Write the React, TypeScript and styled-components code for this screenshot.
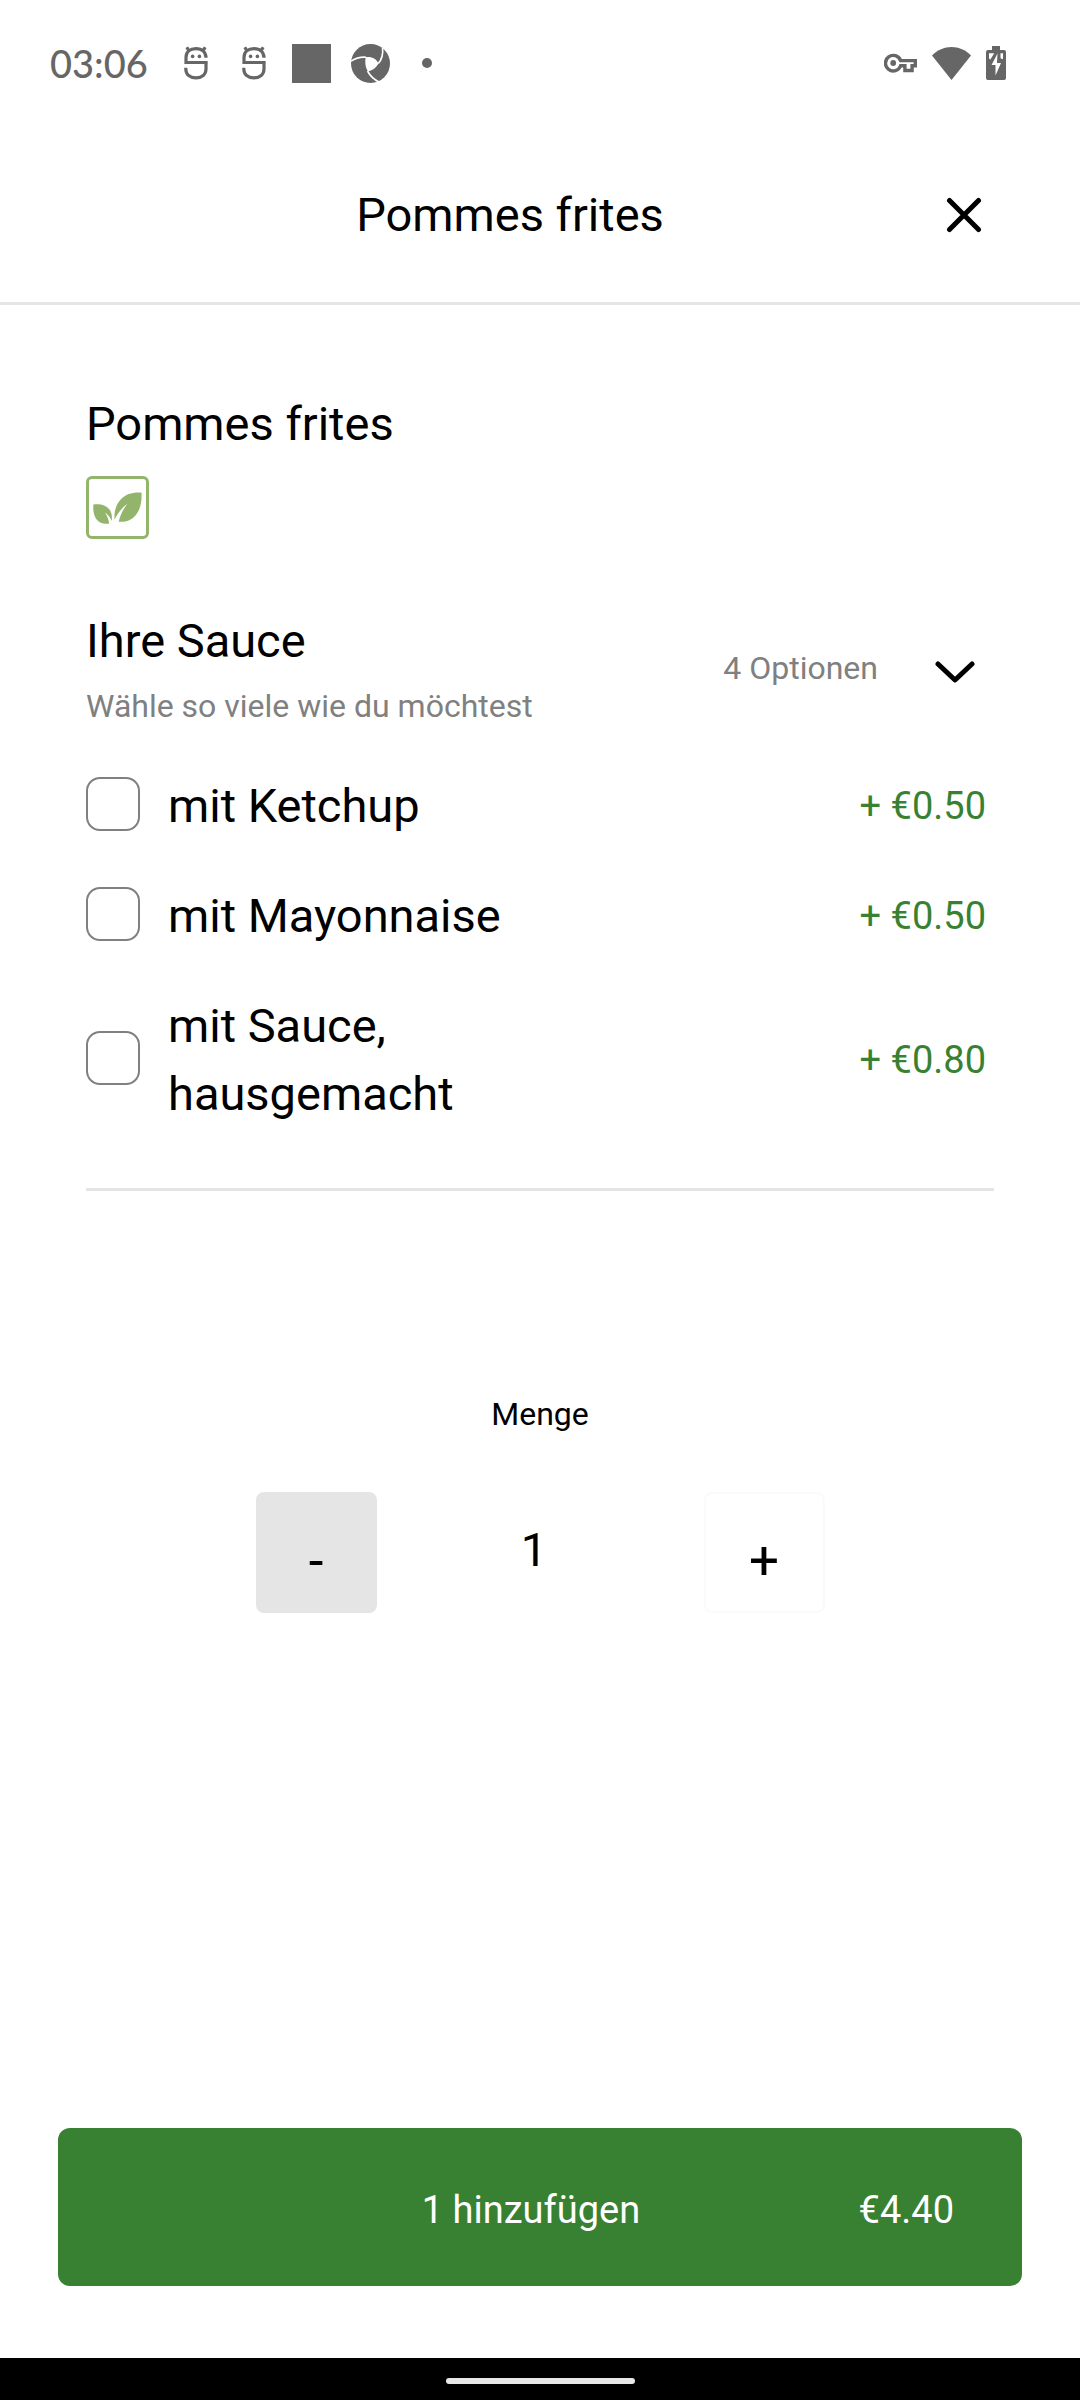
import React, { useState } from "react";
import styled, { createGlobalStyle } from "styled-components";

const GlobalStyle = createGlobalStyle`
  *, *::before, *::after { box-sizing: border-box; }
  body {
    margin: 0;
    background: #ffffff;
    color: #000000;
    font-family: Roboto, "Noto Sans", sans-serif;
  }
  h1, h2, h3, p, ul { margin: 0; padding: 0; font-weight: 400; }
  button, input { font: inherit; color: inherit; }
  svg { display: block; }
`;

const Page = styled.div`
  display: flex;
  flex-direction: column;
  min-height: 100vh;
`;

const StatusBar = styled.div`
  display: flex;
  align-items: center;
  justify-content: space-between;
  height: 126px;
  padding: 0 74px 0 50px;
  color: #666666;
`;

const Clock = styled.time`
  margin-right: 36px;
  font-family: Lato, sans-serif;
  font-size: 38px;
  font-weight: 500;
  line-height: 40px;
`;

const IconGroup = styled.div<{ $gap: number }>`
  display: flex;
  align-items: center;
  gap: ${(p) => p.$gap}px;
`;

const SolidSquare = styled.span`
  width: 39px;
  height: 39px;
  margin-left: 6px;
  background: currentColor;
`;

const Dot = styled.span`
  width: 10px;
  height: 10px;
  margin-left: 12px;
  border-radius: 50%;
  background: currentColor;
`;

const Header = styled.header`
  display: flex;
  align-items: center;
  height: 179px;
  padding: 2px 86px 0;
  border-bottom: 3px solid #e5e5e5;
`;

const HeaderTitle = styled.h1`
  flex: 1;
  text-align: center;
  font-size: 47px;
  line-height: 68px;
`;

const IconButton = styled.button<{ $width: number }>`
  display: flex;
  align-items: center;
  justify-content: center;
  width: ${(p) => p.$width}px;
  height: 60px;
  padding: 0;
  border: 0;
  background: transparent;
  cursor: pointer;
`;

const Main = styled.main`
  display: flex;
  flex-direction: column;
  padding: 85px 86px 0;
`;

const Heading = styled.h2`
  font-size: 47px;
  line-height: 68px;
`;

const DietBadge = styled.span`
  display: flex;
  align-items: center;
  justify-content: center;
  width: 63px;
  height: 63px;
  margin-top: 18px;
  border: 3px solid #93b56b;
  border-radius: 6px;
  color: #93b56b;
`;

const GroupHeader = styled.div`
  display: flex;
  align-items: center;
  margin-top: 68px;
`;

const GroupText = styled.div`
  display: flex;
  flex: 1;
  flex-direction: column;
  gap: 8px;
`;

const Note = styled.p`
  color: #808080;
  font-size: 32px;
  line-height: 46px;
`;

const OptionCount = styled(Note)`
  margin-right: 38px;
`;

const OptionList = styled.ul`
  display: flex;
  flex-direction: column;
  gap: 42px;
  margin-top: 43px;
  padding-bottom: 60px;
  border-bottom: 3px solid #e5e5e5;
  list-style: none;
`;

const OptionLabel = styled.label`
  display: flex;
  align-items: center;
  gap: 28px;
  padding-right: 8px;
  cursor: pointer;
`;

const Checkbox = styled.input`
  appearance: none;
  flex: none;
  width: 54px;
  height: 54px;
  margin: 0 0 4px;
  border: 2px solid #808080;
  border-radius: 14px;
  background: #ffffff;

  &:checked { background: #388132; border-color: #388132; }
`;

const OptionName = styled.span`
  width: 50%;
  font-size: 47px;
  line-height: 68px;
`;

const OptionPrice = styled.span`
  margin-left: auto;
  color: #388132;
  font-size: 38px;
  line-height: 68px;
`;

const Quantity = styled.section`
  display: flex;
  flex-direction: column;
  align-items: center;
  gap: 55px;
  margin-top: 200px;
`;

const QuantityLabel = styled.label`
  font-size: 32px;
  line-height: 46px;
`;

const Stepper = styled.div`
  display: flex;
  align-items: center;
`;

const StepButton = styled.button<{ $filled?: boolean }>`
  width: 121px;
  height: 121px;
  padding: 16px 0 0;
  border: 2px solid ${(p) => (p.$filled ? "#e5e5e5" : "#fafafa")};
  border-radius: 8px;
  background: ${(p) => (p.$filled ? "#e5e5e5" : "#ffffff")};
  font-size: 53px;
  line-height: 60px;
  cursor: pointer;
`;

const QuantityInput = styled.input`
  width: 327px;
  height: 74px;
  padding: 0 12px 6px 0;
  border: 0;
  background: transparent;
  text-align: center;
  font-size: 47px;
  line-height: 68px;
`;

const Footer = styled.footer`
  display: flex;
  margin-top: auto;
  padding: 60px 58px 72px;
`;

const AddButton = styled.button`
  display: grid;
  flex: 1;
  grid-template-columns: 1fr auto 1fr;
  align-items: center;
  height: 158px;
  padding: 6px 68px 0 50px;
  border: 0;
  border-radius: 12px;
  background: #388132;
  color: #ffffff;
  font-size: 38px;
  line-height: 60px;
  cursor: pointer;
`;

const AddLabel = styled.span`
  grid-column: 2;
`;

const Total = styled.span`
  text-align: right;
`;

const NavigationBar = styled.div`
  display: flex;
  align-items: center;
  justify-content: center;
  height: 42px;
  padding-top: 4px;
  background: #000000;
`;

const NavigationHandle = styled.span`
  width: 189px;
  height: 6px;
  border-radius: 3px;
  background: #e8e8e8;
`;

const MascotIcon = () => (
  <svg width="24" height="34" viewBox="0 0 24 34" fill="none" stroke="currentColor" strokeWidth="3.200" aria-hidden="true">
    <path d="M23.200 16.500H2V11.500C2 6 6 2.700 12 2.700S22 6 22 11.800" />
    <path d="M1.800 21.800V23C1.800 28.500 6 31.800 12 31.800S22 28.500 22 23V16.500H2" />
    <path d="M2.800 1.200l2.400 4M21.200 1.200l-2.400 4" />
    <g fill="currentColor" stroke="none">
      <circle cx="8.600" cy="10.400" r="1.800" />
      <circle cx="15.400" cy="10.400" r="1.800" />
    </g>
  </svg>
);

const ApertureIcon = () => (
  <svg width="39" height="39" viewBox="0 0 39 39" aria-hidden="true">
    <circle cx="19.5" cy="19.5" r="19.5" fill="currentColor" />
    <path d="M14.600 13.200c3.400-.6 6.400 0 8.900 1.600 1.900 1.300 3.200 2.900 4 4.700-1.300 2.500-3.400 4.700-6 6.200-1.600.9-3 1.400-4.500 1.500-1.400-2-2.400-4.600-2.600-7.300-.2-2.400-.2-4.500.2-6.700z" fill="#ffffff" />
    <g fill="none" stroke="#ffffff" strokeWidth="1.600">
      <path d="M0 17.200c4-2.800 9-4.400 15-4" />
      <path d="M31.500 3.500c.8 6-.4 11.500-4.200 16" />
      <path d="M16.500 27c2.500 4.700 6.500 8.500 11.500 11" />
    </g>
  </svg>
);

const KeyIcon = () => (
  <svg width="33" height="20" viewBox="0 0 33 20" fill="none" stroke="currentColor" aria-hidden="true">
    <path d="M16.600 7.600h14.700v5.200h-3.200v4.700h-7.200v-4.700h-4.300A7.800 7.800 0 1 1 16.600 7.600z" strokeWidth="3.400" />
    <circle cx="9.200" cy="10" r="2.900" fill="currentColor" stroke="none" />
  </svg>
);

const WifiIcon = () => (
  <svg width="39" height="33" viewBox="0 0 39 33" fill="currentColor" aria-hidden="true">
    <path d="M0 8.600C5.600 2.900 12.200 0 19.500 0S33.400 2.900 39 8.600L19.500 33z" />
  </svg>
);

const BatteryIcon = () => (
  <svg width="20" height="34" viewBox="0 0 20 34" aria-hidden="true">
    <path d="M6 0h8v4h4a2 2 0 0 1 2 2v26a2 2 0 0 1-2 2H2a2 2 0 0 1-2-2V6a2 2 0 0 1 2-2h4z" fill="currentColor" />
    <path d="M11.500 7.500L5.500 19h4v10.500L15 17h-4z" fill="#ffffff" />
    <path d="M3 7.300h5.200L4.400 13.500 3 12.500zM14.500 7.300H17v6l-2.500-1z" fill="#ffffff" />
  </svg>
);

const CloseIcon = () => (
  <svg width="36" height="36" viewBox="0 0 36 36" fill="none" stroke="currentColor" strokeWidth="5" strokeLinecap="round" aria-hidden="true">
    <path d="M3.500 3.500l29 29M32.500 3.500l-29 29" />
  </svg>
);

const ChevronIcon = () => (
  <svg width="40" height="32" viewBox="0 0 40 32" fill="none" stroke="currentColor" strokeWidth="5" strokeLinecap="round" strokeLinejoin="round" aria-hidden="true">
    <path d="M3 12l17 16 17-16" />
  </svg>
);

const LeavesIcon = () => (
  <svg width="49" height="32" viewBox="0 0 49 32" fill="currentColor" aria-hidden="true">
    <path d="M.4 12.400c7.600-.8 13.600 1.200 16.600 5.800 1.700 2.700 2.200 6 1.800 10.700-1.600-3.400-3.600-6-7-8.700 2.400 3.600 3.900 7 4.300 11.600C8.500 32 4.400 29.700 2.200 25.200.4 21.500 0 17.200.4 12.400z" />
    <path d="M48.500.6c.6 9.200-1.300 17.200-5.800 22.600-4.200 5-9.800 7-17 6.500 1.500-6.600 4.200-12 8.600-18-5.800 4.600-9.800 9.600-12.800 16-.5-8.400 1.500-15.600 6.600-20.700C33.200 1.900 39.900-.1 48.500.6z" />
  </svg>
);

const OPTIONS = [
  { id: "ketchup", name: "mit Ketchup", price: "+ €0.50" },
  { id: "mayonnaise", name: "mit Mayonnaise", price: "+ €0.50" },
  { id: "hausgemacht", name: "mit Sauce, hausgemacht", price: "+ €0.80" },
];

export default function App() {
  const [count, setCount] = useState(1);

  return (
    <Page>
      <GlobalStyle />
      <StatusBar>
        <IconGroup $gap={0}>
          <Clock>03:06</Clock>
          <IconGroup $gap={20}>
            <IconGroup $gap={34}>
              <MascotIcon />
              <MascotIcon />
            </IconGroup>
            <SolidSquare />
            <ApertureIcon />
            <Dot />
          </IconGroup>
        </IconGroup>
        <IconGroup $gap={15}>
          <KeyIcon />
          <WifiIcon />
          <BatteryIcon />
        </IconGroup>
      </StatusBar>

      <Header>
        <HeaderTitle>Pommes frites</HeaderTitle>
        <IconButton type="button" $width={60} aria-label="Schließen">
          <CloseIcon />
        </IconButton>
      </Header>

      <Main>
        <Heading>Pommes frites</Heading>
        <DietBadge role="img" aria-label="Vegetarisch">
          <LeavesIcon />
        </DietBadge>

        <GroupHeader>
          <GroupText>
            <Heading>Ihre Sauce</Heading>
            <Note>Wähle so viele wie du möchtest</Note>
          </GroupText>
          <OptionCount>4 Optionen</OptionCount>
          <IconButton type="button" $width={78} aria-label="Optionen einklappen">
            <ChevronIcon />
          </IconButton>
        </GroupHeader>

        <OptionList>
          {OPTIONS.map((option) => (
            <li key={option.id}>
              <OptionLabel htmlFor={option.id}>
                <Checkbox type="checkbox" id={option.id} />
                <OptionName>{option.name}</OptionName>
                <OptionPrice>{option.price}</OptionPrice>
              </OptionLabel>
            </li>
          ))}
        </OptionList>

        <Quantity>
          <QuantityLabel htmlFor="quantity">Menge</QuantityLabel>
          <Stepper>
            <StepButton type="button" $filled onClick={() => setCount(Math.max(1, count - 1))}>
              -
            </StepButton>
            <QuantityInput id="quantity" type="text" inputMode="numeric" value={count} readOnly />
            <StepButton type="button" onClick={() => setCount(count + 1)}>
              +
            </StepButton>
          </Stepper>
        </Quantity>
      </Main>

      <Footer>
        <AddButton type="button">
          <AddLabel>{count} hinzufügen</AddLabel>
          <Total>€{(count * 4.4).toFixed(2)}</Total>
        </AddButton>
      </Footer>

      <NavigationBar>
        <NavigationHandle />
      </NavigationBar>
    </Page>
  );
}
